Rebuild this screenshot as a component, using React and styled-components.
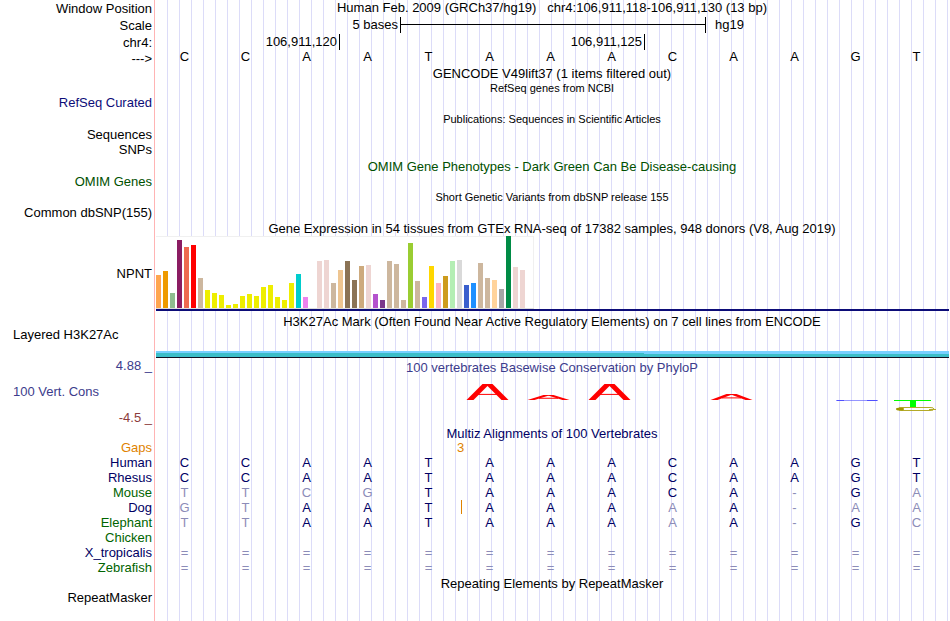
import styled, { createGlobalStyle } from 'styled-components';

const GlobalStyle = createGlobalStyle`
  body {
    margin: 0;
    background: #ffffff;
    color: #000000;
    font-family: 'Liberation Sans', Arial, sans-serif;
    font-size: 13px;
  }
`;

const Browser = styled.main`
  min-height: 100vh;
  background-image:
    linear-gradient(#ffb4b4, #ffb4b4),
    repeating-linear-gradient(to right, transparent 0 11px, #dcdcf8 11px 12px);
  background-repeat: no-repeat;
  background-position: 154px 0, 156px 0;
  background-size: 1px 100%, auto;
`;

const Row = styled.div`
  display: grid;
  grid-template-columns: 154px minmax(0, 1fr);
  height: ${({ height }) => height}px;
  line-height: 15px;
`;

const Label = styled.div`
  align-self: center;
  padding-right: 2px;
  text-align: right;
  white-space: nowrap;
  color: ${({ color }) => color};
`;

const LeftLabel = styled(Label)`
  align-self: start;
  padding-left: 13px;
  text-align: left;
  line-height: 12px;
`;

const AxisLabels = styled.div`
  display: flex;
  flex-direction: column;
  justify-content: space-between;

  ${Label} {
    align-self: stretch;
  }
`;

const Title = styled.div`
  grid-column: 2;
  align-self: ${({ align }) => align || 'end'};
  text-align: center;
  white-space: pre;
  font-size: ${({ small }) => (small ? 11 : 13)}px;
  line-height: ${({ leading }) => leading || 15}px;
  color: ${({ color }) => color};
`;

const Bases = styled.div`
  display: grid;
  grid-template-columns: repeat(13, minmax(0, 1fr));
  padding-right: 3px;
  line-height: 13px;
  text-align: center;
`;

const Ruler = styled.div`
  display: grid;
  grid-template-columns: repeat(13, minmax(0, 1fr));
  align-items: center;
  padding: 0 1px 0 2px;
`;

const RulerText = styled.div`
  grid-column: ${({ span }) => span};
  box-sizing: border-box;
  padding: 0 2px 0 9px;
  border-left: ${({ tick }) => (tick ? '1px solid #000000' : 'none')};
  text-align: ${({ align }) => align || 'right'};
  white-space: nowrap;
  line-height: 16px;
`;

const ScaleBar = styled.div`
  grid-column: 5 / 10;
  height: 16px;
  border-left: 1px solid #000000;
  background: linear-gradient(#000000, #000000) 0 7px / 100% 1px no-repeat;
`;

const Expression = styled.div`
  margin: 0 1px 0 2px;
  border-bottom: 2px solid #0c0c78;
`;

const BarChart = styled.div`
  display: flex;
  align-items: flex-end;
  gap: 2px;
  box-sizing: border-box;
  width: 378px;
  height: 73px;
  background: #ffffff;
  border-bottom: 1px solid #dcdcdc;
  box-shadow: inset -1px 1px #f0f0f0;
`;

const Bar = styled.div`
  flex: none;
  width: 5px;
  height: ${({ value }) => value}px;
  background: ${({ color }) => color};
`;

const Signal = styled.div`
  display: flex;
  align-self: end;
  height: 6px;
  margin: 0 1px 0 2px;
  border-bottom: 1px solid #101020;
`;

const SignalPart = styled.div`
  flex: ${({ size }) => size};
  background: #3cbec8;
  border-top: ${({ top }) => top}px solid #78d0ff;
  box-sizing: border-box;
`;

const Conservation = styled.div`
  padding-top: 2px;
`;

const Marks = styled(Bases)`
  padding-top: 1px;
`;

const Mark = styled.svg`
  display: block;
  width: 100%;
  height: 40px;
`;

const Alignment = styled.table`
  width: calc(100% - 3px);
  table-layout: fixed;
  border-collapse: collapse;
  line-height: 15px;

  tr {
    height: 15px;
  }

  td,
  th {
    padding: 0;
    text-align: center;
    font-weight: normal;
  }
`;

const LabelColumn = styled.col`
  width: 154px;
`;

const Species = styled.th`
  &&& {
    padding-right: 2px;
    text-align: right;
    color: ${({ color }) => color};
  }
`;

const Base = styled.td`
  position: relative;
  height: 15px;
  color: ${({ faint }) => (faint ? '#8c8cb8' : '#000064')};
`;

const Insert = styled.span`
  position: absolute;
  top: 0;
  left: 2px;
  width: 1px;
  height: 14px;
  background: #e08200;
`;

const GapCount = styled.td`
  &&& {
    padding-left: 3px;
    color: #e08200;
  }
`;

const navy = '#0c0c78';
const darkBlue = '#000064';
const green = '#006400';
const violet = '#3c3c8c';

const sequence = 'CCAATAAACAAGT';

const expression = [
  [33, '#ffa54f'], [37, '#ee9a00'], [15, '#8fbc8f'], [68, '#8b1c62'], [61, '#ee6a50'],
  [63, '#ff0000'], [30, '#cdb79e'], [18, '#eeee00'], [15, '#eeee00'], [13, '#eeee00'],
  [3, '#eeee00'], [4, '#eeee00'], [12, '#eeee00'], [14, '#eeee00'], [12, '#eeee00'],
  [21, '#eeee00'], [23, '#eeee00'], [11, '#eeee00'], [8, '#eeee00'], [25, '#eeee00'],
  [34, '#00cdcd'], [11, '#ee82ee'], [0, '#9ac0cd'], [47, '#eed5d2'], [48, '#eed5d2'],
  [25, '#cdb79e'], [38, '#eec591'], [47, '#8b7355'], [28, '#8b7355'], [42, '#cdaa7d'],
  [43, '#eed5d2'], [14, '#b452cd'], [8, '#7a378b'], [47, '#cdb79e'], [44, '#cdb79e'],
  [8, '#cdb79e'], [65, '#9acd32'], [27, '#cdb79e'], [11, '#7a67ee'], [42, '#ffd700'],
  [25, '#ffb6c1'], [32, '#cd9b1d'], [47, '#b4eeb4'], [48, '#d9d9d9'], [23, '#3a5fcd'],
  [25, '#1e90ff'], [45, '#cdb79e'], [30, '#cdb79e'], [28, '#ffd39b'], [19, '#a6a6a6'],
  [72, '#008b45'], [41, '#eed5d2'], [38, '#eed5d2'], [0, '#ff00ff'],
];

// Lower case bases differ from human and are drawn faint.
const species = [
  { name: 'Human', color: darkBlue, bases: 'CCAATAAACAAGT' },
  { name: 'Rhesus', color: darkBlue, bases: 'CCAATAAACAAGT' },
  { name: 'Mouse', color: green, bases: 'ttcgTAAACA-Ga' },
  { name: 'Dog', color: darkBlue, bases: 'gtAATAAAaA-aa', insertAt: 5 },
  { name: 'Elephant', color: green, bases: 'ttAATAAAaA-Gc' },
  { name: 'Chicken', color: green, bases: '             ' },
  { name: 'X_tropicalis', color: darkBlue, bases: '=============' },
  { name: 'Zebrafish', color: green, bases: '=============' },
];

// Two slanted strokes, clipped to the score's height.
function Peak({ height }) {
  const weight = (7 * height) / Math.hypot(height, 16);
  return (
    <svg x='0' y={24 - height} width='61' height={height} stroke='#ff0000' strokeWidth={weight}>
      <line x1='-5' y1={height * 2} x2='43' y2={-height} />
      <line x1='62' y1={height * 2} x2='14' y2={-height} />
      <line x1='19' y1={height * 0.65} x2='38' y2={height * 0.65} strokeWidth='1' />
    </svg>
  );
}

const marks = {
  5: <Peak height={16} />,
  6: <Peak height={5} />,
  7: <Peak height={16} />,
  9: <Peak height={6} />,
  11: (
    <g fill='#5050ff'>
      <rect x='11' y='24' width='42' height='1' opacity='0.6' />
      <rect x='12' y='24' width='7' height='1' />
      <rect x='42' y='24' width='10' height='1' />
    </g>
  ),
  12: (
    <g>
      <rect x='8' y='24' width='37' height='1' fill='#00ff00' />
      <rect x='24' y='24' width='6' height='7' fill='#00ff00' />
      <rect x='12' y='31.5' width='36' height='3' rx='4' ry='1.5' fill='none' stroke='#b4aa28' />
      <ellipse cx='14' cy='33' rx='4' ry='1.5' fill='#a09600' />
      <rect x='43' y='33' width='7' height='1' fill='#b4aa28' />
    </g>
  ),
};

function TitleRow({ height, children, ...rest }) {
  return (
    <Row height={height}>
      <Title {...rest}>{children}</Title>
    </Row>
  );
}

function LabelRow({ height, color, children }) {
  return (
    <Row height={height}>
      <Label color={color}>{children}</Label>
    </Row>
  );
}

function App() {
  return (
    <Browser>
      <GlobalStyle />
      <Row height={16}>
        <Label>Window Position</Label>
        <Title align='start'>
          {'Human Feb. 2009 (GRCh37/hg19)   chr4:106,911,118-106,911,130 (13 bp)'}
        </Title>
      </Row>
      <Row height={18}>
        <Label>Scale</Label>
        <Ruler>
          <RulerText span='1 / 5'>5 bases</RulerText>
          <ScaleBar />
          <RulerText span='10 / 14' tick align='left'>hg19</RulerText>
        </Ruler>
      </Row>
      <Row height={16}>
        <Label>chr4:</Label>
        <Ruler>
          <RulerText span='1 / 4'>106,911,120</RulerText>
          <RulerText span='4 / 9' tick>106,911,125</RulerText>
          <RulerText span='9 / 14' tick>&nbsp;</RulerText>
        </Ruler>
      </Row>
      <Row height={16}>
        <Label>---&gt;</Label>
        <Bases>
          {sequence.split('').map((base, index) => (
            <span key={index}>{base}</span>
          ))}
        </Bases>
      </Row>
      <TitleRow height={15}>GENCODE V49lift37 (1 items filtered out)</TitleRow>
      <TitleRow height={14} small>RefSeq genes from NCBI</TitleRow>
      <LabelRow height={14} color={navy}>RefSeq Curated</LabelRow>
      <TitleRow height={18} small>Publications: Sequences in Scientific Articles</TitleRow>
      <LabelRow height={14}>Sequences</LabelRow>
      <LabelRow height={16}>SNPs</LabelRow>
      <TitleRow height={17} color='#005000'>
        OMIM Gene Phenotypes - Dark Green Can Be Disease-causing
      </TitleRow>
      <LabelRow height={12} color='#005000'>OMIM Genes</LabelRow>
      <TitleRow height={19} small>Short Genetic Variants from dbSNP release 155</TitleRow>
      <LabelRow height={14}>Common dbSNP(155)</LabelRow>
      <TitleRow height={17}>
        Gene Expression in 54 tissues from GTEx RNA-seq of 17382 samples, 948 donors (V8, Aug 2019)
      </TitleRow>
      <Row height={75}>
        <Label>NPNT</Label>
        <Expression>
          <BarChart>
            {expression.map(([value, color], index) => (
              <Bar key={index} value={value} color={color} />
            ))}
          </BarChart>
        </Expression>
      </Row>
      <TitleRow height={18}>
        H3K27Ac Mark (Often Found Near Active Regulatory Elements) on 7 cell lines from ENCODE
      </TitleRow>
      <Row height={29}>
        <LeftLabel>Layered H3K27Ac</LeftLabel>
        <Signal>
          <SignalPart size={488} top={2} />
          <SignalPart size={305} top={3} />
        </Signal>
      </Row>
      <Row height={67}>
        <AxisLabels>
          <Label color={violet}>4.88 _</Label>
          <LeftLabel color={violet}>100 Vert. Cons</LeftLabel>
          <Label color='#8c3c3c'>-4.5 _</Label>
        </AxisLabels>
        <Conservation>
          <Title color={violet}>100 vertebrates Basewise Conservation by PhyloP</Title>
          <Marks>
            {sequence.split('').map((base, index) => (
              <Mark key={index} viewBox='0 0 61 40'>{marks[index]}</Mark>
            ))}
          </Marks>
        </Conservation>
      </Row>
      <TitleRow height={15} align='start' leading={17} color={darkBlue}>
        Multiz Alignments of 100 Vertebrates
      </TitleRow>
      <Alignment>
        <colgroup>
          <LabelColumn />
          <col span='13' />
        </colgroup>
        <tbody>
          <tr>
            <Species scope='row' color='#e08200'>Gaps</Species>
            <td colSpan={4} />
            <GapCount colSpan={2}>3</GapCount>
            <td colSpan={7} />
          </tr>
          {species.map(({ name, color, bases, insertAt }) => (
            <tr key={name}>
              <Species scope='row' color={color}>{name}</Species>
              {bases.split('').map((base, index) => (
                <Base key={index} faint={base === base.toLowerCase()}>
                  {insertAt === index && <Insert />}
                  {base.toUpperCase()}
                </Base>
              ))}
            </tr>
          ))}
        </tbody>
      </Alignment>
      <TitleRow height={15} align='start' leading={17}>Repeating Elements by RepeatMasker</TitleRow>
      <LabelRow height={15}>RepeatMasker</LabelRow>
    </Browser>
  );
}

export default App;
